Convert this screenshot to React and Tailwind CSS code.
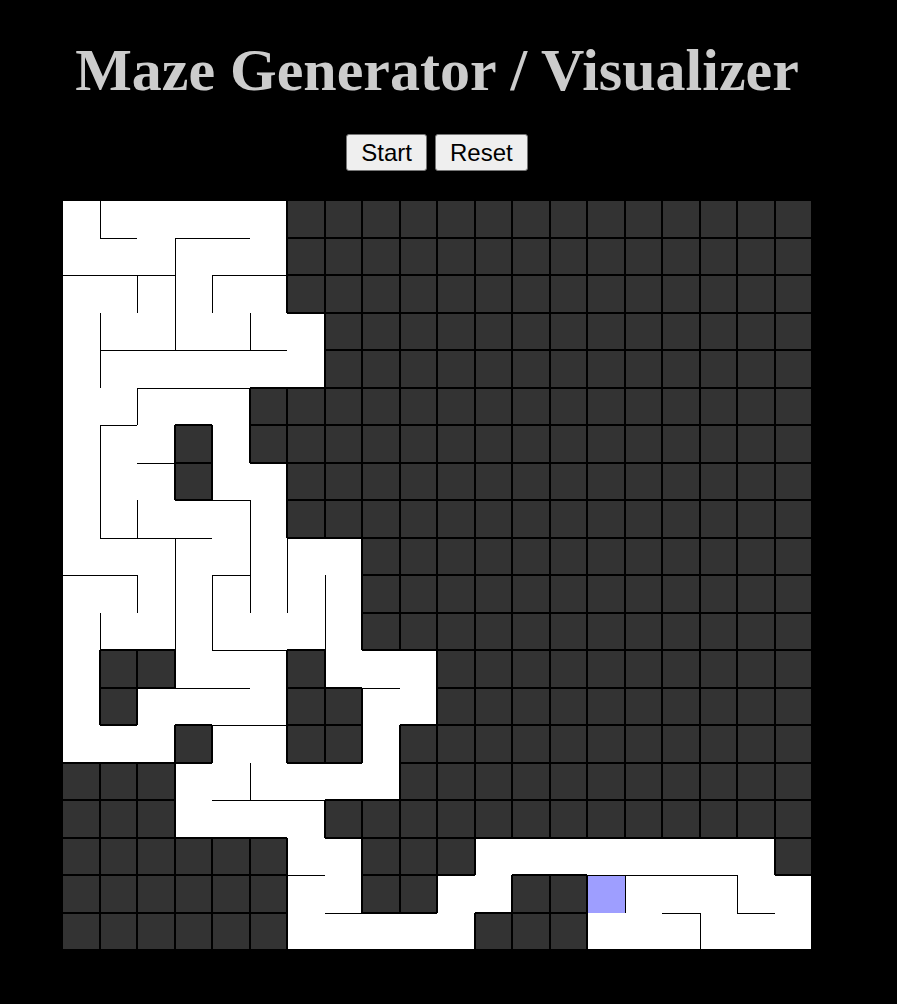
import React from 'react';

const SIZE = 20;

// '#' = not visited yet, '.' = visited, 'o' = current cell
const STATE = [
  '......##############',
  '......##############',
  '......##############',
  '.......#############',
  '.......#############',
  '.....###############',
  '...#.###############',
  '...#..##############',
  '......##############',
  '........############',
  '........############',
  '........############',
  '.##...#...##########',
  '.#....##..##########',
  '...#..##.###########',
  '###......###########',
  '###....#############',
  '######..###........#',
  '######..##..##o.....',
  '######.....###......',
];

// walls still standing between two visited cells
const TOP = {
  1: [1, 3, 4],
  2: [0, 1, 2, 4, 5],
  4: [1, 2, 3, 4, 5],
  5: [2, 3, 4],
  6: [1],
  7: [2],
  8: [4],
  9: [1, 2, 3],
  10: [0, 1, 4],
  12: [4, 5],
  13: [3, 4, 8],
  14: [4, 5],
  16: [4, 5, 6],
  18: [6, 14, 15, 16, 17],
  19: [7, 16, 18],
};

const LEFT = {
  0: [1],
  1: [3],
  2: [2, 3, 4],
  3: [1, 3, 5],
  4: [1],
  5: [2],
  6: [1],
  7: [1],
  8: [1, 2, 5],
  9: [3, 5, 6],
  10: [2, 3, 4, 5, 6, 7],
  11: [1, 3, 4, 7],
  15: [5],
  18: [15, 18],
  19: [17],
};

const isDark = (r, c) => r >= 0 && r < SIZE && c >= 0 && c < SIZE && STATE[r][c] === '#';

const Cell = ({ r, c }) => {
  const s = STATE[r][c];
  if (s === '#') {
    return <div className="w-[37.5px] h-[37.5px] bg-[#333333] border border-black" />;
  }

  const top = r === 0 || isDark(r - 1, c) || (TOP[r] || []).includes(c);
  const left = c === 0 || isDark(r, c - 1) || (LEFT[r] || []).includes(c);
  const right = c === SIZE - 1 || isDark(r, c + 1);
  const bottom = r === SIZE - 1 || isDark(r + 1, c);

  return (
    <div
      className={`w-[37.5px] h-[37.5px] border-black ${s === 'o' ? 'bg-[#9e9eff]' : 'bg-white'} ${
        top ? 'border-t' : ''
      } ${left ? 'border-l' : ''} ${right ? 'border-r' : ''} ${bottom ? 'border-b' : ''}`}
    />
  );
};

const App = () => {
  const cells = [];
  for (let r = 0; r < SIZE; r++) {
    for (let c = 0; c < SIZE; c++) {
      cells.push(<Cell key={`${r}-${c}`} r={r} c={c} />);
    }
  }

  return (
    <div className="min-h-screen w-full bg-black">
      <div className="w-[874px] flex flex-col items-center">
        <h1 className="pt-[40px] font-['Liberation_Serif',serif] text-[60px] leading-[60px] font-bold text-[#cccccc]">
          Maze Generator / Visualizer
        </h1>

        <div className="mt-[34px] flex gap-2 font-['Liberation_Sans',Arial,sans-serif] text-[24px] text-black">
          <button className="px-[14px] py-[4px] bg-[#efefef] border border-[#767676] rounded-[3px] leading-[27px]">
            Start
          </button>
          <button className="px-[14px] py-[4px] bg-[#efefef] border border-[#767676] rounded-[3px] leading-[27px]">
            Reset
          </button>
        </div>

        <div className="mt-[29px] grid grid-cols-[repeat(20,37.5px)] grid-rows-[repeat(20,37.5px)]">
          {cells}
        </div>
      </div>
    </div>
  );
};

export default App;
